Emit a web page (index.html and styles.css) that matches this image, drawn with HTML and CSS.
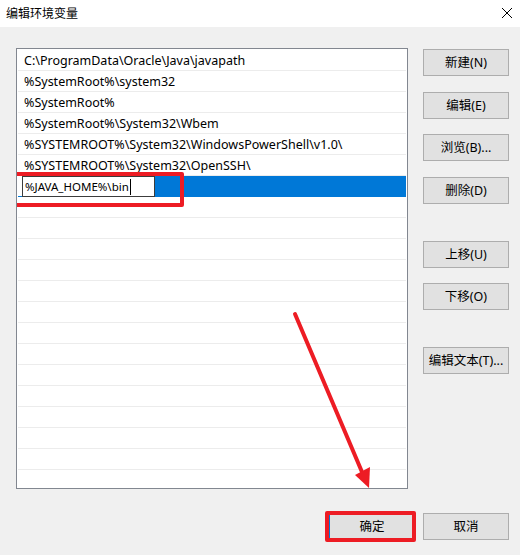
FILE: index.html
```html
<!DOCTYPE html>
<html lang="zh-CN">
<head>
<meta charset="utf-8">
<title>编辑环境变量</title>
<link rel="stylesheet" href="styles.css">
</head>
<body>
<div class="window">
  <div class="titlebar">
    <span class="title">编辑环境变量</span>
    <svg class="close" width="12" height="12" viewBox="0 0 12 12"><path d="M1 1 L11 11 M11 1 L1 11" stroke="#000" stroke-width="1" fill="none"/></svg>
  </div>
  <div class="main">
    <div class="list">
      <div class="row">C:\ProgramData\Oracle\Java\javapath</div>
      <div class="row">%SystemRoot%\system32</div>
      <div class="row">%SystemRoot%</div>
      <div class="row">%SystemRoot%\System32\Wbem</div>
      <div class="row">%SYSTEMROOT%\System32\WindowsPowerShell\v1.0\</div>
      <div class="row">%SYSTEMROOT%\System32\OpenSSH\</div>
      <div class="row selected">
        <div class="editwrap"><div class="edit">%JAVA_HOME%\bin<span class="caret"></span></div></div>
        <div class="mark mark-edit"></div>
      </div>
      <div class="row"></div>
      <div class="row"></div>
      <div class="row"></div>
      <div class="row"></div>
      <div class="row"></div>
      <div class="row"></div>
      <div class="row"></div>
      <div class="row"></div>
      <div class="row"></div>
      <div class="row"></div>
      <div class="row"></div>
      <div class="row"></div>
      <div class="row"></div>
      <div class="row"></div>
    </div>
    <div class="side">
      <div class="group">
        <button class="btn">新建(N)</button>
        <button class="btn">编辑(E)</button>
        <button class="btn">浏览(B)...</button>
        <button class="btn">删除(D)</button>
      </div>
      <div class="group group2">
        <button class="btn">上移(U)</button>
        <button class="btn">下移(O)</button>
      </div>
      <div class="group group3">
        <button class="btn">编辑文本(T)...</button>
      </div>
    </div>
  </div>
  <div class="footer">
    <div class="okwrap">
      <button class="btn default">确定</button>
      <div class="mark mark-ok"></div>
    </div>
    <button class="btn">取消</button>
  </div>
  <svg class="arrow" width="520" height="555" viewBox="0 0 520 555">
    <line x1="295" y1="314" x2="362" y2="472" stroke="#ed1c24" stroke-width="4" stroke-linecap="round"/>
    <polygon points="355,475 370,467 369,488" fill="#ed1c24"/>
  </svg>
</div>
</body>
</html>
```
FILE: styles.css
```css
* { box-sizing: border-box; }
html, body { margin: 0; padding: 0; }
body {
  width: 520px;
  height: 555px;
  overflow: hidden;
  background: #f0f0f0;
  font-family: "Noto Sans", "Noto Sans CJK SC", sans-serif;
  font-size: 12px;
  color: #000;
}
.window { position: relative; width: 520px; height: 555px; }
.titlebar {
  height: 27px;
  background: #fff;
  display: flex;
  justify-content: space-between;
  align-items: center;
  padding: 0 7px 2px 6px;
}
.title { font-family: "Noto Sans CJK SC", sans-serif; font-size: 12px; line-height: 16px; }
.close { display: block; }
.main {
  display: flex;
  padding: 21px 0 0 16px;
}
.list {
  width: 392px;
  height: 441px;
  background: #fff;
  border: 1px solid #828790;
  padding: 1px 1px 0 1px;
  overflow: hidden;
}
.row {
  position: relative;
  height: 21px;
  border-bottom: 1px solid #ececec;
  padding-left: 6px;
  font-size: 12.5px;
  line-height: 21px;
  white-space: nowrap;
}
.row.selected {
  background: #0078d7;
  padding-left: 0;
  border-bottom-color: #0078d7;
}
.editwrap {
  height: 20px;
  width: 137px;
  background: #fff;
  padding-left: 4px;
}
.edit {
  height: 21px;
  width: 133px;
  border: 1px solid #3c3c3c;
  background: #fff;
  padding-left: 2px;
  font-size: 11.5px;
  line-height: 19px;
  display: flex;
  align-items: center;
}
.caret {
  display: inline-block;
  width: 1px;
  height: 16px;
  background: #000;
  margin-left: 1px;
}
.mark {
  position: absolute;
  border: 4px solid #ed1c24;
  border-radius: 2px;
}
.mark-edit { left: -11px; top: -4px; width: 177px; height: 35px; }
.side {
  margin-left: 15px;
  padding-top: 1px;
  display: flex;
  flex-direction: column;
}
.group { display: flex; flex-direction: column; gap: 15.5px; }
.group2 { margin-top: 37px; gap: 15px; }
.group3 { margin-top: 37px; }
.btn {
  width: 86px;
  height: 27px;
  background: #e1e1e1;
  border: 1px solid #adadad;
  font-family: "Noto Sans", "Noto Sans CJK SC", sans-serif;
  font-size: 12.5px;
  color: #000;
  padding: 0;
  line-height: 25px;
}
.btn.default { border-color: #0078d7; }
.footer {
  display: flex;
  justify-content: flex-end;
  gap: 8px;
  padding-right: 11px;
  margin-top: 24px;
}
.okwrap { position: relative; }
.mark-ok { left: -4px; top: -2px; width: 91px; height: 31px; }
.arrow { position: absolute; left: 0; top: 0; pointer-events: none; }
```
